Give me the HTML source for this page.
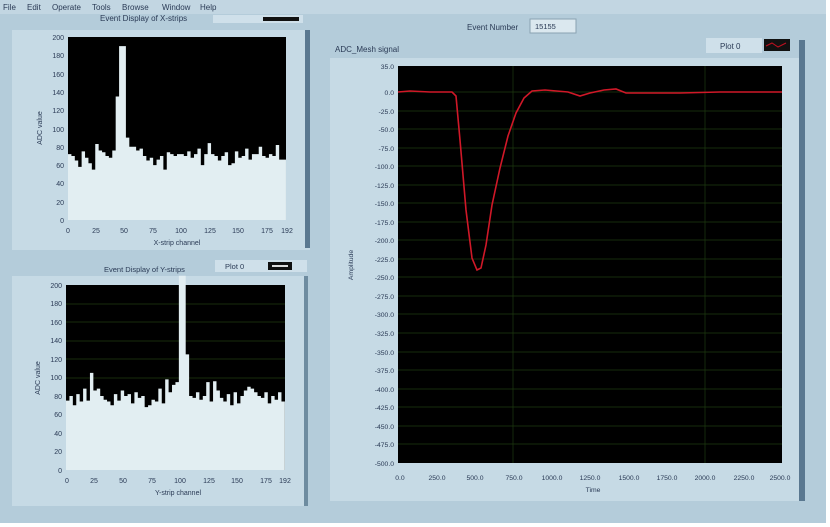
<!DOCTYPE html>
<html><head><meta charset="utf-8"><style>
html,body{margin:0;padding:0;width:830px;height:527px;overflow:hidden;background:#fff}
svg text{font-family:"Liberation Sans",sans-serif;fill:#2a3a55}
</style></head><body>
<svg width="830" height="527" viewBox="0 0 830 527" xmlns="http://www.w3.org/2000/svg">
<rect x="0" y="0" width="826" height="523" fill="#b4ccda"/>
<rect x="0" y="0" width="826" height="14" fill="#c2d6e2"/>
<g font-size="8" fill="#1c2a48">
<text x="3" y="10">File</text><text x="27" y="10">Edit</text><text x="52" y="10">Operate</text><text x="92" y="10" fill="#6a7c90">Tools</text><text x="122" y="10">Browse</text><text x="162" y="10">Window</text><text x="200" y="10">Help</text>
</g>
<text x="100" y="21" font-size="8">Event Display of X-strips</text>
<rect x="213" y="15" width="90" height="8" fill="#cfe0ea"/><rect x="263" y="17" width="36" height="4" fill="#111"/>

<!-- panel 1 -->
<rect x="12" y="30" width="298" height="220" fill="#c6dae5"/>
<rect x="305" y="30" width="5" height="218" fill="#5a7890"/>
<rect x="68" y="37" width="218" height="183" fill="#000"/>
<g transform="translate(68,220) scale(3.406,-0.915)" fill="#e2eef2">
<path d="M0 0V72H1V70H2V65H3V58H4V75H5V68H6V62H7V55H8V83H9V76H10V74H11V70H12V68H13V76H14V135H15V190H16V190H17V90H18V80H19V80H20V76H21V78H22V70H23V65H24V68H25V60H26V66H27V70H28V55H29V74H30V72H31V70H32V72H33V72H34V70H35V75H36V68H37V72H38V78H39V60H40V72H41V84H42V72H43V70H44V65H45V70H46V74H47V60H48V62H49V75H50V68H51V70H52V78H53V66H54V72H55V72H56V80H57V70H58V68H59V72H60V70H61V82H62V66H63V66H64V0Z"/>
</g>
<g font-size="7" text-anchor="end">
<text x="64" y="40">200</text><text x="64" y="58">180</text><text x="64" y="77">160</text><text x="64" y="95">140</text><text x="64" y="113">120</text><text x="64" y="132">100</text><text x="64" y="150">80</text><text x="64" y="168">60</text><text x="64" y="186">40</text><text x="64" y="205">20</text><text x="64" y="223">0</text>
</g>
<g font-size="7" text-anchor="middle">
<text x="68" y="233">0</text><text x="96" y="233">25</text><text x="124" y="233">50</text><text x="153" y="233">75</text><text x="181" y="233">100</text><text x="210" y="233">125</text><text x="238" y="233">150</text><text x="267" y="233">175</text><text x="287" y="233">192</text>
<text x="177" y="245">X-strip channel</text>
<text transform="translate(42,128) rotate(-90)">ADC value</text>
</g>

<!-- panel 2 -->
<text x="104" y="272" font-size="7.5">Event Display of Y-strips</text>
<rect x="215" y="260" width="92" height="12" fill="#cfe0ea"/><text x="225" y="269" font-size="7.5">Plot 0</text><rect x="268" y="262" width="24" height="8" fill="#111"/><rect x="272" y="265" width="16" height="2" fill="#ddd"/>
<rect x="12" y="276" width="296" height="230" fill="#c6dae5"/>
<rect x="304" y="276" width="4" height="230" fill="#6e8ca0"/>
<rect x="66" y="285" width="219" height="185" fill="#000"/>
<g stroke="#1f3a10" stroke-width="0.7"><line x1="66" y1="304" x2="285" y2="304"/><line x1="66" y1="322" x2="285" y2="322"/><line x1="66" y1="341" x2="285" y2="341"/><line x1="66" y1="359" x2="285" y2="359"/><line x1="66" y1="378" x2="285" y2="378"/></g>
<g transform="translate(66,470) scale(3.42,-0.925)" fill="#e2eef2">
<path d="M0 0V75H1V80H2V70H3V82H4V74H5V88H6V75H7V105H8V86H9V88H10V80H11V76H12V74H13V70H14V82H15V75H16V86H17V80H18V82H19V72H20V84H21V78H22V80H23V68H24V70H25V76H26V74H27V88H28V72H29V98H30V84H31V92H32V95H33V210H34V210H35V125H36V80H37V78H38V84H39V76H40V80H41V95H42V74H43V96H44V86H45V78H46V74H47V82H48V70H49V84H50V72H51V80H52V86H53V90H54V88H55V84H56V80H57V78H58V84H59V72H60V80H61V76H62V84H63V74H64V0Z"/>
</g>
<g font-size="7" text-anchor="end">
<text x="62" y="288">200</text><text x="62" y="306">180</text><text x="62" y="325">160</text><text x="62" y="343">140</text><text x="62" y="362">120</text><text x="62" y="380">100</text><text x="62" y="399">80</text><text x="62" y="417">60</text><text x="62" y="436">40</text><text x="62" y="454">20</text><text x="62" y="473">0</text>
</g>
<g font-size="7" text-anchor="middle">
<text x="67" y="483">0</text><text x="94" y="483">25</text><text x="123" y="483">50</text><text x="152" y="483">75</text><text x="180" y="483">100</text><text x="209" y="483">125</text><text x="237" y="483">150</text><text x="266" y="483">175</text><text x="285" y="483">192</text>
<text x="178" y="495">Y-strip channel</text>
<text transform="translate(40,378) rotate(-90)">ADC value</text>
</g>

<!-- event number -->
<text x="467" y="30" font-size="8">Event Number</text>
<rect x="530" y="19" width="46" height="14" fill="#dbe8ef" stroke="#8aa2b2"/><text x="535" y="29" font-size="7.5" fill="#6a7c90">15155</text>

<!-- big panel -->
<text x="335" y="52" font-size="8">ADC_Mesh signal</text>
<rect x="706" y="38" width="56" height="15" fill="#cfe0ea"/><text x="720" y="49" font-size="8">Plot 0</text>
<rect x="764" y="39" width="26" height="12" fill="#111"/><path d="M766 46 L772 43 L778 47 L786 43" stroke="#c01020" fill="none"/>
<rect x="330" y="58" width="474" height="443" fill="#c6dae5"/>
<rect x="799" y="40" width="6" height="461" fill="#5a7890"/>
<rect x="398" y="66" width="384" height="397" fill="#000"/>
<g stroke="#1e3a10" stroke-width="0.7">
<line x1="398" y1="92" x2="782" y2="92"/><line x1="398" y1="111" x2="782" y2="111"/><line x1="398" y1="129" x2="782" y2="129"/><line x1="398" y1="148" x2="782" y2="148"/><line x1="398" y1="166" x2="782" y2="166"/><line x1="398" y1="185" x2="782" y2="185"/><line x1="398" y1="203" x2="782" y2="203"/><line x1="398" y1="222" x2="782" y2="222"/><line x1="398" y1="240" x2="782" y2="240"/><line x1="398" y1="259" x2="782" y2="259"/><line x1="398" y1="277" x2="782" y2="277"/><line x1="398" y1="296" x2="782" y2="296"/><line x1="398" y1="314" x2="782" y2="314"/><line x1="398" y1="333" x2="782" y2="333"/><line x1="398" y1="352" x2="782" y2="352"/><line x1="398" y1="370" x2="782" y2="370"/><line x1="398" y1="389" x2="782" y2="389"/><line x1="398" y1="407" x2="782" y2="407"/><line x1="398" y1="426" x2="782" y2="426"/><line x1="398" y1="444" x2="782" y2="444"/>
<line x1="513" y1="66" x2="513" y2="463"/><line x1="705" y1="66" x2="705" y2="463"/>
</g>
<path d="M398 92 L410 91 L430 92 L452 92 L456 96 L460 140 L466 210 L472 258 L477 270 L481 268 L486 245 L492 205 L500 168 L508 136 L516 113 L524 98 L532 91 L545 90 L568 92 L580 96 L590 93 L604 90 L616 89 L626 93 L650 93 L680 93 L720 92 L782 92" stroke="#d01828" stroke-width="1.6" fill="none"/>
<g font-size="6.8" text-anchor="end">
<text x="394" y="69">35.0</text><text x="394" y="95">0.0</text><text x="394" y="114">-25.0</text><text x="394" y="132">-50.0</text><text x="394" y="151">-75.0</text><text x="394" y="169">-100.0</text><text x="394" y="188">-125.0</text><text x="394" y="206">-150.0</text><text x="394" y="225">-175.0</text><text x="394" y="243">-200.0</text><text x="394" y="262">-225.0</text><text x="394" y="280">-250.0</text><text x="394" y="299">-275.0</text><text x="394" y="317">-300.0</text><text x="394" y="336">-325.0</text><text x="394" y="355">-350.0</text><text x="394" y="373">-375.0</text><text x="394" y="392">-400.0</text><text x="394" y="410">-425.0</text><text x="394" y="429">-450.0</text><text x="394" y="447">-475.0</text><text x="394" y="466">-500.0</text>
</g>
<g font-size="6.8" text-anchor="middle">
<text x="400" y="480">0.0</text><text x="437" y="480">250.0</text><text x="475" y="480">500.0</text><text x="514" y="480">750.0</text><text x="552" y="480">1000.0</text><text x="590" y="480">1250.0</text><text x="629" y="480">1500.0</text><text x="667" y="480">1750.0</text><text x="705" y="480">2000.0</text><text x="744" y="480">2250.0</text><text x="780" y="480">2500.0</text>
<text x="593" y="492">Time</text>
<text transform="translate(353,265) rotate(-90)">Amplitude</text>
</g>
</svg>
</body></html>
